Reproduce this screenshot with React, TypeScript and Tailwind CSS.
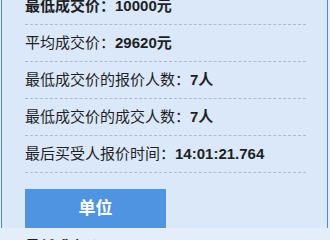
import React from "react";

const font = {
  fontFamily: '"Liberation Sans", "Noto Sans CJK SC", sans-serif',
};

type Row = { label: string; value: string; allBold?: boolean };

const rows: Row[] = [
  { label: "最低成交价：", value: "10000元", allBold: true },
  { label: "平均成交价：", value: "29620元" },
  { label: "最低成交价的报价人数：", value: "7人" },
  { label: "最低成交价的成交人数：", value: "7人" },
  { label: "最后买受人报价时间：", value: "14:01:21.764" },
];

export default function App() {
  return (
    <div className="h-[240px] w-[330px] overflow-hidden bg-[#e4eefb]" style={font}>
      <div className="ml-px h-full w-[327px] border-x border-[#4f8ac8] bg-[#dae8fa] pl-[23px]">
        <div className="-mt-[12px] w-[281px]">
          {rows.map((r, i) => (
            <div
              key={i}
              className="flex h-[37px] items-center border-b border-dashed border-[#a9bdd3] text-[15px] text-[#1f1f1f]"
            >
              <span className={r.allBold ? "font-bold" : ""}>{r.label}</span>
              <span className="font-bold">{r.value}</span>
            </div>
          ))}
        </div>
        <button className="mt-[16px] flex h-[39px] w-[141px] items-center justify-center bg-[#4f94e0] text-[17px] font-bold text-white">
          单位
        </button>
        <div className="mt-[8px] text-[15px] font-bold text-[#1f1f1f]">
          最低成交价：10000元
        </div>
      </div>
    </div>
  );
}
